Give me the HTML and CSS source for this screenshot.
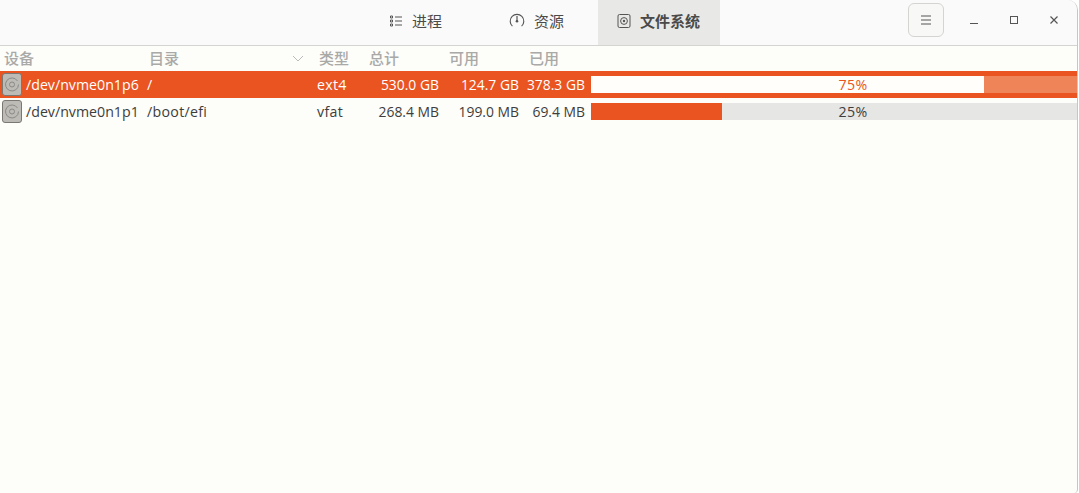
FILE: index.html
```html
<!DOCTYPE html>
<html lang="zh-CN">
<head>
    <meta charset="UTF-8">
    <title>系统监视器</title>
    <link rel="stylesheet" href="styles.css">
</head>
<body>
    <div class="window">
        <header class="titlebar">
            <nav class="tabs">
                <div class="tab tab-processes">
                    <svg class="tab-icon" width="14" height="14" viewBox="0 0 14 14">
                        <path d="M1.5 2h2v2h-2zM1.5 6h2v2h-2zM1.5 10h2v2h-2z" fill="none" stroke="#555" stroke-width="1"/>
                        <path d="M6 3h7M6 7h7M6 11h7" stroke="#555" stroke-width="1"/>
                    </svg>
                    <span>进程</span>
                </div>
                <div class="tab tab-resources">
                    <svg class="tab-icon" width="16" height="16" viewBox="0 0 16 16">
                        <path d="M3.4 13.2A6.8 6.8 0 1 1 12.6 13.2" fill="none" stroke="#555" stroke-width="1.1"/>
                        <path d="M8 3v5" stroke="#555" stroke-width="1.2"/>
                        <circle cx="8" cy="8.2" r="1.3" fill="#555"/>
                    </svg>
                    <span>资源</span>
                </div>
                <div class="tab tab-files active">
                    <svg class="tab-icon" width="14" height="16" viewBox="0 0 14 16">
                        <rect x="1" y="1.5" width="12" height="13" rx="1.5" fill="none" stroke="#555" stroke-width="1"/>
                        <circle cx="7" cy="8" r="3.4" fill="none" stroke="#555" stroke-width="1"/>
                        <circle cx="7" cy="8" r="1.2" fill="#555"/>
                    </svg>
                    <span>文件系统</span>
                </div>
            </nav>
            <div class="controls">
                <button class="menu-btn">
                    <svg width="12" height="10" viewBox="0 0 12 10">
                        <path d="M1 1h10M1 5h10M1 9h10" stroke="#555" stroke-width="1"/>
                    </svg>
                </button>
                <div class="win-btn">
                    <svg width="10" height="10" viewBox="0 0 10 10"><path d="M1 8.5h8" stroke="#555" stroke-width="1"/></svg>
                </div>
                <div class="win-btn">
                    <svg width="10" height="10" viewBox="0 0 10 10"><rect x="1.5" y="1.5" width="7" height="7" fill="none" stroke="#555" stroke-width="1"/></svg>
                </div>
                <div class="win-btn">
                    <svg width="10" height="10" viewBox="0 0 10 10"><path d="M1.5 1.5l7 7M8.5 1.5l-7 7" stroke="#555" stroke-width="1.2"/></svg>
                </div>
            </div>
        </header>

        <div class="table">
            <div class="row head">
                <div class="col-device">设备</div>
                <div class="col-dir">目录
                    <svg class="sort" width="12" height="7" viewBox="0 0 12 7"><path d="M1 1l5 5 5-5" fill="none" stroke="#bbb" stroke-width="1"/></svg>
                </div>
                <div class="col-type">类型</div>
                <div class="col-head">总计</div>
                <div class="col-head">可用</div>
                <div class="col-head">已用</div>
                <div></div>
            </div>

            <div class="row disk selected">
                <div class="device">
                    <svg class="disk-icon" width="20" height="23" viewBox="0 0 20 23">
                        <rect x="0.5" y="0.5" width="19" height="22" rx="2.5" fill="#bdbbb6" stroke="#7b7873"/>
                        <path d="M15.5 8A6.5 6.5 0 1 0 16.5 11.5" fill="none" stroke="#8b8985"/>
                        <circle cx="10" cy="11.5" r="2.5" fill="none" stroke="#8b8985"/>
                    </svg>
                    <span>/dev/nvme0n1p6</span>
                </div>
                <div class="dir">/</div>
                <div class="type">ext4</div>
                <div class="num">530.0 GB</div>
                <div class="num">124.7 GB</div>
                <div class="num">378.3 GB</div>
                <div class="bar">
                    <div class="fill" style="width: 393px"></div>
                    <span class="pct">75%</span>
                </div>
            </div>

            <div class="row disk">
                <div class="device">
                    <svg class="disk-icon" width="20" height="23" viewBox="0 0 20 23">
                        <rect x="0.5" y="0.5" width="19" height="22" rx="2.5" fill="#bdbbb6" stroke="#7b7873"/>
                        <path d="M15.5 8A6.5 6.5 0 1 0 16.5 11.5" fill="none" stroke="#8b8985"/>
                        <circle cx="10" cy="11.5" r="2.5" fill="none" stroke="#8b8985"/>
                    </svg>
                    <span>/dev/nvme0n1p1</span>
                </div>
                <div class="dir">/boot/efi</div>
                <div class="type">vfat</div>
                <div class="num">268.4 MB</div>
                <div class="num">199.0 MB</div>
                <div class="num">69.4 MB</div>
                <div class="bar">
                    <div class="fill" style="width: 131px"></div>
                    <span class="pct">25%</span>
                </div>
            </div>
        </div>
    </div>
</body>
</html>
```

FILE: styles.css
```css
body {
    margin: 0;
    background-color: #ffffff;
    font-family: "Open Sans", "Noto Sans CJK SC", sans-serif;
    font-size: 14.2px;
    color: #3d3d3d;
}

.window {
    width: 1077px;
    height: 493px;
    overflow: hidden;
    background-color: #fdfdf9;
    border-right: 1px solid #c6c6c4;
    border-top-right-radius: 10px;
    border-bottom-right-radius: 4px;
}

.titlebar {
    height: 45px;
    display: flex;
    justify-content: space-between;
    background-color: #fafafa;
    border-bottom: 1px solid #d5d4d1;
}

.tabs {
    display: flex;
    margin-left: 358px;
}

.tab {
    height: 45px;
    display: flex;
    align-items: center;
    gap: 9px;
    padding-bottom: 4px;
    box-sizing: border-box;
    font-family: "Noto Sans CJK SC", sans-serif;
    font-size: 15px;
    color: #4a4a4a;
}

.tab-processes {
    width: 120px;
    padding-left: 31px;
}

.tab-resources {
    width: 120px;
    padding-left: 31px;
}

.tab-files {
    width: 122px;
    padding-left: 19px;
    background-color: #e8e8e6;
    font-weight: 700;
}

.controls {
    display: flex;
    align-items: center;
    margin-right: 3px;
    padding-bottom: 6px;
}

.menu-btn {
    width: 36px;
    height: 34px;
    margin-right: 10px;
    padding: 0;
    display: flex;
    align-items: center;
    justify-content: center;
    background-color: #f8f8f7;
    border: 1px solid #d5d4d1;
    border-radius: 6px;
}

.win-btn {
    width: 40px;
    height: 34px;
    display: flex;
    align-items: center;
    justify-content: center;
}

.row {
    display: grid;
    grid-template-columns: 145px 170px 50px 80px 80px 66px 524px;
}

.head {
    height: 25px;
    align-items: center;
    font-family: "Noto Sans CJK SC", sans-serif;
    font-size: 15px;
    line-height: 24px;
    padding-bottom: 1px;
    box-sizing: border-box;
    color: #a9a9a7;
    font-weight: 500;
}

.col-device, .col-dir, .col-type, .col-head {
    padding-left: 4px;
    height: 24px;
}

.col-dir {
    display: flex;
    align-items: center;
    justify-content: space-between;
    padding-right: 11px;
}

.disk {
    height: 27px;
    align-items: center;
}

.selected {
    background-color: #e95420;
    color: #ffffff;
}

.device {
    display: flex;
    align-items: center;
    gap: 4px;
    padding-left: 2px;
    white-space: nowrap;
}

.dir, .type {
    padding-left: 2px;
    letter-spacing: 0.3px;
}

.num {
    text-align: right;
    padding-right: 6px;
    font-size: 13.9px;
    white-space: nowrap;
}

.bar {
    position: relative;
    height: 17px;
    background-color: #e6e6e4;
    text-align: center;
    color: #3d3d3d;
}

.fill {
    height: 100%;
    background-color: #e95420;
}

.pct {
    position: absolute;
    top: 0;
    left: 0;
    right: 0;
    line-height: 17px;
    letter-spacing: 0.4px;
}

.selected .bar {
    background-color: #ee8458;
    color: #e95420;
}

.selected .fill {
    background-color: #fffefb;
}
```
